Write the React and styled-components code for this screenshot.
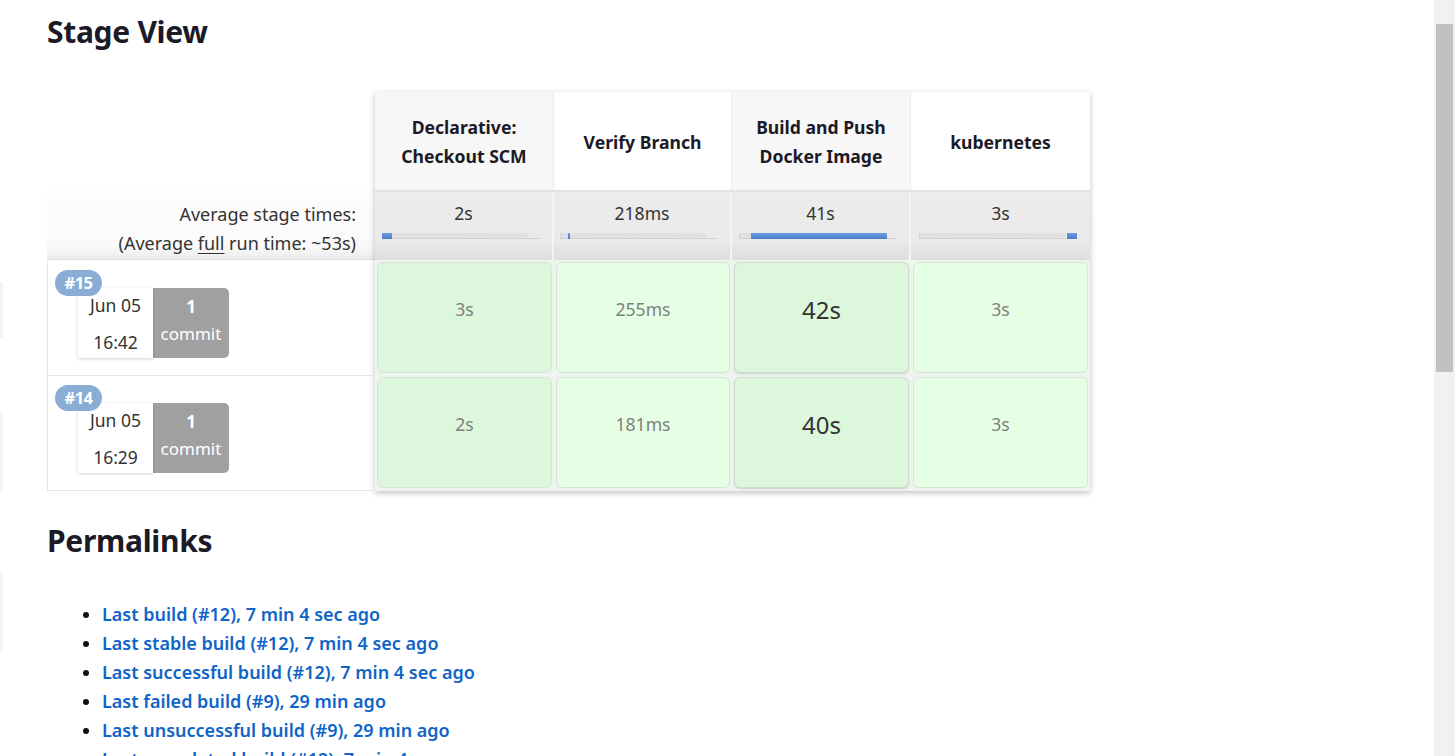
import React from 'react'
import styled, { createGlobalStyle } from 'styled-components'

const GlobalStyle = createGlobalStyle`
  html, body {
    margin: 0;
    padding: 0;
    height: 100%;
    overflow: hidden;
    background: #fff;
    font-family: "Noto Sans", "Open Sans", sans-serif;
    color: #333;
  }
`

const stages = [
  { name: ['Declarative:', 'Checkout SCM'], avg: '2s', left: 0, width: 10 },
  { name: ['Verify Branch'], avg: '218ms', left: 8, width: 2 },
  { name: ['Build and Push', 'Docker Image'], avg: '41s', left: 12, width: 136 },
  { name: ['kubernetes'], avg: '3s', left: 148, width: 10 },
]

const builds = [
  { id: '#15', date: 'Jun 05', time: '16:42', times: ['3s', '255ms', '42s', '3s'] },
  { id: '#14', date: 'Jun 05', time: '16:29', times: ['2s', '181ms', '40s', '3s'] },
]

const links = [
  'Last build (#12), 7 min 4 sec ago',
  'Last stable build (#12), 7 min 4 sec ago',
  'Last successful build (#12), 7 min 4 sec ago',
  'Last failed build (#9), 29 min ago',
  'Last unsuccessful build (#9), 29 min ago',
  'Last completed build (#12), 7 min 4 sec ago',
]

export default function App() {
  return (
    <Page>
      <GlobalStyle />
      <Gutter>
        <Ghost $h={56} $gap={282} />
        <Ghost $h={80} $gap={74} />
        <Ghost $h={80} $gap={80} />
      </Gutter>
      <Main>
        <Heading>Stage View</Heading>
        <StageTable>
          <LeftCol>
            <LeftHead />
            <AvgLabel>
              <div>Average stage times:</div>
              <div>(Average <u>full</u> run time: ~53s)</div>
            </AvgLabel>
            {builds.map(b => (
              <BuildCell key={b.id}>
                <Badge>{b.id}</Badge>
                <DateBox>
                  <DateLine $top={5}>{b.date}</DateLine>
                  <DateLine $top={13}>{b.time}</DateLine>
                </DateBox>
                <CommitBox>
                  <CommitLine $top={7} $bold>1</CommitLine>
                  <CommitLine $top={3}>commit</CommitLine>
                </CommitBox>
              </BuildCell>
            ))}
          </LeftCol>
          <StagesPanel>
            <HeadRow>
              {stages.map((s, i) => (
                <StageHead key={i} $alt={i % 2 === 0}>
                  {s.name.map(n => <div key={n}>{n}</div>)}
                </StageHead>
              ))}
            </HeadRow>
            <AvgRow>
              {stages.map((s, i) => (
                <AvgCell key={i}>
                  <AvgTime>{s.avg}</AvgTime>
                  <Track>
                    <Fill style={{ marginLeft: s.left, width: s.width }} />
                  </Track>
                </AvgCell>
              ))}
            </AvgRow>
            {builds.map(b => (
              <RunRow key={b.id}>
                {b.times.map((t, i) => (
                  <RunCell key={i} $alt={i % 2 === 0} $long={i === 2}>
                    {t}
                  </RunCell>
                ))}
              </RunRow>
            ))}
          </StagesPanel>
        </StageTable>
        <Heading $top={30}>Permalinks</Heading>
        <LinkList>
          {links.map(l => (
            <li key={l}><a href="#">{l}</a></li>
          ))}
        </LinkList>
      </Main>
      <ScrollTrack>
        <Thumb />
      </ScrollTrack>
    </Page>
  )
}

const Page = styled.div`
  display: flex;
  height: 756px;
  overflow: hidden;
`
const Gutter = styled.div`
  width: 3px;
  display: flex;
  flex-direction: column;
  flex-shrink: 0;
`
const Ghost = styled.div`
  height: ${p => p.$h}px;
  margin-top: ${p => p.$gap}px;
  background: #f4f4f8;
`
const Main = styled.div`
  flex: 1;
  padding-left: 44px;
  padding-top: 12px;
`
const Heading = styled.h2`
  margin: ${p => p.$top || 0}px 0 0;
  font-size: 30px;
  line-height: 40px;
  font-weight: 700;
  color: #1b1a26;
  letter-spacing: -0.3px;
`
const StageTable = styled.div`
  display: flex;
  margin-top: 40px;
`
const LeftCol = styled.div`
  width: 328px;
  display: flex;
  flex-direction: column;
`
const LeftHead = styled.div`
  height: 98px;
`
const AvgLabel = styled.div`
  height: 70px;
  box-sizing: border-box;
  padding: 10px 19px 0 0;
  text-align: right;
  font-size: 18px;
  line-height: 29px;
  color: #333;
  background: linear-gradient(#fdfdfd 0%, #fafafa 80%, #ececec 100%);
  border-bottom: 1px solid #dcdcdc;
  margin-bottom: 1px;
  u { text-decoration-thickness: 1px; text-underline-offset: 3px; }
`
const BuildCell = styled.div`
  position: relative;
  height: 115px;
  box-sizing: border-box;
  border: 1px solid #e6e6e6;
  border-top: none;
  display: flex;
  align-items: flex-start;
  padding: 27px 0 0 30px;
  &:first-of-type { border-top: 1px solid #e6e6e6; }
`
const Badge = styled.div`
  position: absolute;
  top: 9px;
  left: 7px;
  z-index: 2;
  height: 26px;
  width: 47px;
  border-radius: 13px;
  background: #8aadd6;
  color: #fff;
  font-weight: 700;
  font-size: 16.5px;
  line-height: 26px;
  text-align: center;
  letter-spacing: -0.5px;
`
const DateBox = styled.div`
  width: 75px;
  height: 70px;
  background: #fff;
  box-shadow: 0 1px 3px rgba(0, 0, 0, 0.18);
  display: flex;
  flex-direction: column;
  align-items: center;
  z-index: 1;
`
const DateLine = styled.div`
  margin-top: ${p => p.$top}px;
  font-size: 17.5px;
  line-height: 24px;
  color: #333;
`
const CommitBox = styled.div`
  width: 76px;
  height: 70px;
  background: #a0a0a0;
  border-radius: 0 5px 5px 0;
  display: flex;
  flex-direction: column;
  align-items: center;
`
const CommitLine = styled.div`
  margin-top: ${p => p.$top}px;
  font-size: 17px;
  line-height: 24px;
  color: #fff;
  font-weight: ${p => (p.$bold ? 700 : 400)};
`
const StagesPanel = styled.div`
  width: 715px;
  display: flex;
  flex-direction: column;
  background: #eef4ee;
  box-shadow: 0 2px 6px rgba(0, 0, 0, 0.25);
`
const HeadRow = styled.div`
  display: grid;
  grid-template-columns: 179px 178px 179px 179px;
  height: 98px;
`
const StageHead = styled.div`
  display: flex;
  flex-direction: column;
  justify-content: center;
  align-items: center;
  background: ${p => (p.$alt ? '#f7f7f7' : '#fff')};
  border-right: 1px solid #ececec;
  font-size: 17.6px;
  font-weight: 700;
  line-height: 29px;
  color: #1b1a26;
  padding-top: 2px;
  &:last-child { border-right: none; }
`
const AvgRow = styled.div`
  display: grid;
  grid-template-columns: 179px 178px 179px 179px;
  height: 70px;
  border-top: 2px solid #e2e2e2;
  box-sizing: border-box;
`
const AvgCell = styled.div`
  display: flex;
  flex-direction: column;
  align-items: center;
  background: linear-gradient(#ececec 0%, #eaeaea 70%, #dedede 100%);
  border-right: 2px solid #f4f4f4;
  &:last-child { border-right: none; }
`
const AvgTime = styled.div`
  margin-top: 10px;
  font-size: 17.6px;
  line-height: 22px;
  color: #333;
`
const Track = styled.div`
  box-sizing: border-box;
  width: 158px;
  height: 6px;
  margin: 9px 6px 0 0;
  background: linear-gradient(90deg, #d4d4d4 0, #e0e0e0 2px, #e2e2e2 146px, #eaeaea 147px);
  border-bottom: 1px solid #d2d2d2;
  display: flex;
`
const Fill = styled.div`
  height: 6px;
  background: linear-gradient(#6d9be0, #4a7ecb);
`
const RunRow = styled.div`
  display: grid;
  grid-template-columns: 179px 178px 179px 179px;
  height: 115px;
  padding-top: 2px;
  box-sizing: border-box;
  &:first-of-type { padding-top: 3px; }
`
const RunCell = styled.div`
  margin: 0 2px 2px;
  border-radius: 6px;
  border: 1px solid ${p => (p.$long ? '#cfdccf' : '#d6e4d6')};
  background: ${p => (p.$alt ? '#ddf7dd' : '#e5ffe5')};
  text-align: center;
  padding-top: ${p => (p.$long ? 32 : 34)}px;
  font-size: ${p => (p.$long ? 24 : 17.6)}px;
  line-height: ${p => (p.$long ? 30 : 24)}px;
  color: ${p => (p.$long ? '#333' : '#808080')};
  box-shadow: ${p => (p.$long ? '0 1px 2px rgba(0,0,0,0.15)' : 'none')};
`
const LinkList = styled.ul`
  margin: 39px 0 0;
  padding-left: 55px;
  li {
    font-size: 18px;
    line-height: 29px;
    color: #111;
  }
  a {
    color: #0f64c8;
    font-weight: 600;
    text-decoration: none;
  }
`
const ScrollTrack = styled.div`
  width: 21px;
  flex-shrink: 0;
  background: #f1f1f1;
  padding: 24px 2px 0;
  box-sizing: border-box;
`
const Thumb = styled.div`
  height: 348px;
  background: #c1c1c1;
`
